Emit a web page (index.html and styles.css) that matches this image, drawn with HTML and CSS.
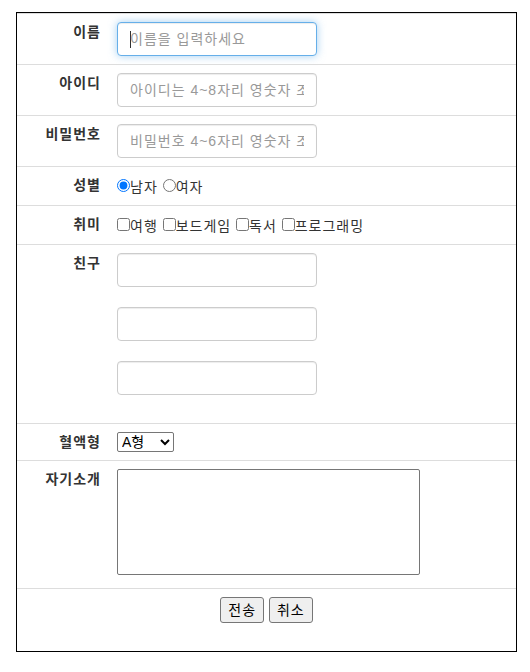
FILE: index.html
```html
<!DOCTYPE html>
<html lang="ko">
<head>
<meta charset="utf-8">
<title>회원가입</title>
<link rel="stylesheet" href="styles.css">
</head>
<body>
<div class="page">
  <form class="box">
    <table class="form-table">
      <tr>
        <th class="label">이름</th>
        <td><input class="field is-focused" type="text" placeholder="이름을 입력하세요"></td>
      </tr>
      <tr>
        <th class="label">아이디</th>
        <td><input class="field" type="text" placeholder="아이디는 4~8자리 영숫자 조합"></td>
      </tr>
      <tr>
        <th class="label">비밀번호</th>
        <td><input class="field" type="password" placeholder="비밀번호 4~6자리 영숫자 조합"></td>
      </tr>
      <tr>
        <th class="label">성별</th>
        <td class="choices"><label><input type="radio" name="gender" checked>남자</label> <label><input type="radio" name="gender">여자</label></td>
      </tr>
      <tr>
        <th class="label">취미</th>
        <td class="choices"><label><input type="checkbox">여행</label> <label><input type="checkbox">보드게임</label> <label><input type="checkbox">독서</label> <label><input type="checkbox">프로그래밍</label></td>
      </tr>
      <tr>
        <th class="label">친구</th>
        <td>
          <div class="friends">
            <input class="field" type="text">
            <input class="field" type="text">
            <input class="field" type="text">
          </div>
        </td>
      </tr>
      <tr>
        <th class="label">혈액형</th>
        <td>
          <select class="blood">
            <option>A형</option>
            <option>B형</option>
            <option>O형</option>
            <option>AB형</option>
          </select>
        </td>
      </tr>
      <tr>
        <th class="label">자기소개</th>
        <td><textarea class="intro"></textarea></td>
      </tr>
      <tr>
        <td class="actions" colspan="2"><button type="submit" class="btn">전송</button> <button type="reset" class="btn">취소</button></td>
      </tr>
    </table>
  </form>
</div>
</body>
</html>
```

FILE: styles.css
```css
html, body {
  margin: 0;
  padding: 0;
  background: #fff;
}

body {
  font-family: "Liberation Sans", "Noto Sans CJK KR", sans-serif;
  font-size: 14px;
  line-height: 20px;
  letter-spacing: 1px;
  color: #333;
}

.page {
  padding: 12px 0 0 16px;
}

.box {
  display: block;
  width: 501px;
  box-sizing: border-box;
  border: 1px solid #000;
  margin: 0;
}

.form-table {
  width: 100%;
  border-collapse: collapse;
  border-spacing: 0;
  margin-bottom: 20px;
}

.form-table th,
.form-table td {
  padding: 8px;
  border-top: 1px solid #ddd;
  vertical-align: top;
  line-height: 20px;
}

.label {
  width: 76px;
  text-align: right;
  font-weight: bold;
  color: #333;
}

.field {
  display: block;
  width: 200px;
  height: 34px;
  box-sizing: border-box;
  padding: 6px 12px;
  margin: 0;
  font-family: inherit;
  font-size: 14px;
  line-height: 20px;
  letter-spacing: 1px;
  color: #555;
  background: #fff;
  border: 1px solid #ccc;
  border-radius: 4px;
  box-shadow: inset 0 1px 1px rgba(0, 0, 0, 0.075);
  outline: none;
}

.field::placeholder {
  color: #999;
}

.field.is-focused {
  border-color: #66afe9;
  box-shadow: inset 0 1px 1px rgba(0, 0, 0, 0.075), 0 0 8px rgba(102, 175, 233, 0.6);
  background: #fff linear-gradient(#333, #333) no-repeat 12px 8px / 1px 17px;
}

.choices input {
  margin: 4px 0 0;
  width: 13px;
  height: 13px;
}

.choices label {
  font-weight: normal;
}

.friends {
  display: flex;
  flex-direction: column;
  gap: 20px;
  padding-bottom: 20px;
}

.blood {
  display: block;
  width: 57px;
  height: 20px;
  margin: 0;
  font-family: inherit;
  font-size: 14px;
  letter-spacing: 0;
  color: #000;
  border: 1px solid #767676;
  border-radius: 2px;
  background: #fff;
}

.intro {
  display: block;
  width: 303px;
  height: 106px;
  box-sizing: border-box;
  margin: 0 0 5px;
  border: 1px solid #767676;
  border-radius: 2px;
  resize: none;
  font-family: "Liberation Mono", monospace;
}

.actions {
  text-align: center;
}

.btn {
  height: 26px;
  box-sizing: border-box;
  padding: 1px 7px;
  margin: 0;
  font-family: inherit;
  font-size: 14px;
  line-height: 20px;
  letter-spacing: 1px;
  color: #000;
  background: #efefef;
  border: 1px solid #767676;
  border-radius: 3px;
}
```
